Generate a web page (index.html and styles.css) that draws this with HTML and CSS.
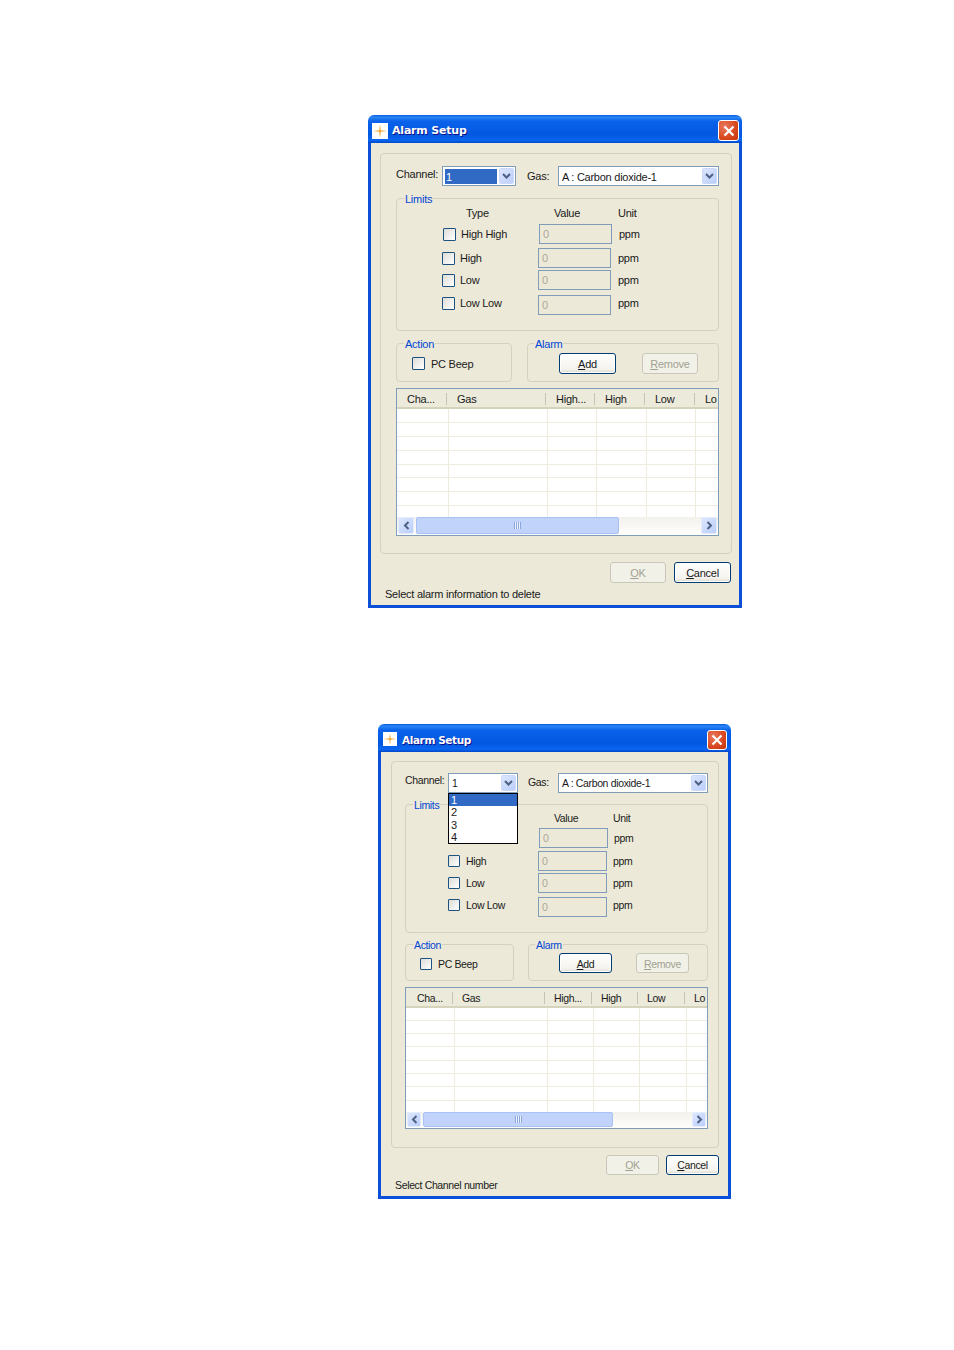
FILE: index.html
```html
<!DOCTYPE html>
<html lang="en">
<head>
<meta charset="utf-8">
<title>Alarm Setup</title>
<link rel="stylesheet" href="styles.css">
</head>
<body>
<section class="dialog d1">
  <header class="titlebar">
    <span class="appicon"><svg viewBox="0 0 16 16" width="100%" height="100%"><rect width="16" height="16" fill="#fff"/><path d="M8 1L8.8 7.2 15 8 8.8 8.8 8 15 7.2 8.8 1 8 7.2 7.2Z" fill="#f0a830"/></svg></span>
    <h1 class="title">Alarm Setup</h1>
    <span class="close"><svg viewBox="0 0 12 12" width="12" height="12"><path d="M1.5 1.5L10.5 10.5M10.5 1.5L1.5 10.5" stroke="#fff" stroke-width="2.2" fill="none"/></svg></span>
  </header>
  <div class="client">
    <div class="panel">
      <div class="toprow">
        <span class="lbl-channel">Channel:</span>
        <div class="combo combo-channel"><span class="combo-value selected">1</span><span class="arrow"><svg viewBox="0 0 9 6" width="9" height="6"><path d="M1 1L4.5 4.5 8 1" stroke="#4d6185" stroke-width="2" fill="none"/></svg></span></div>
        <span class="lbl-gas">Gas:</span>
        <div class="combo combo-gas"><span class="combo-value">A : Carbon dioxide-1</span><span class="arrow"><svg viewBox="0 0 9 6" width="9" height="6"><path d="M1 1L4.5 4.5 8 1" stroke="#4d6185" stroke-width="2" fill="none"/></svg></span></div>
      </div>
      <div class="group limits">
        <span class="legend">Limits</span>
        <div class="heads"><span class="h-type">Type</span><span class="h-value">Value</span><span>Unit</span></div>
        <div class="row first"><span class="check"></span><span class="rowlabel">High High</span><span class="field">0</span><span class="unit">ppm</span></div>
        <div class="row second"><span class="check"></span><span class="rowlabel">High</span><span class="field">0</span><span class="unit">ppm</span></div>
        <div class="row third"><span class="check"></span><span class="rowlabel">Low</span><span class="field">0</span><span class="unit">ppm</span></div>
        <div class="row fourth"><span class="check"></span><span class="rowlabel">Low Low</span><span class="field">0</span><span class="unit">ppm</span></div>
      </div>
      <div class="pair">
        <div class="group action"><span class="legend">Action</span><span class="check"></span><span class="beep">PC Beep</span></div>
        <div class="group alarm"><span class="legend">Alarm</span><span class="btn default"><span><u>A</u>dd</span></span><span class="btn off"><span><u>R</u>emove</span></span></div>
      </div>
      <div class="table">
        <div class="thead"><span>Cha...</span><span>Gas</span><span>High...</span><span>High</span><span>Low</span><span>Lo</span></div>
        <div class="tbody">
          <div class="tr"><i></i><i></i><i></i><i></i><i></i><i></i></div>
          <div class="tr"><i></i><i></i><i></i><i></i><i></i><i></i></div>
          <div class="tr"><i></i><i></i><i></i><i></i><i></i><i></i></div>
          <div class="tr"><i></i><i></i><i></i><i></i><i></i><i></i></div>
          <div class="tr"><i></i><i></i><i></i><i></i><i></i><i></i></div>
          <div class="tr"><i></i><i></i><i></i><i></i><i></i><i></i></div>
          <div class="tr"><i></i><i></i><i></i><i></i><i></i><i></i></div>
          <div class="tr"><i></i><i></i><i></i><i></i><i></i><i></i></div>
        </div>
        <div class="hscroll">
          <span class="sbtn"><svg viewBox="0 0 7 9" width="7" height="9"><path d="M5.5 1L2 4.5 5.5 8" stroke="#4d6185" stroke-width="2" fill="none"/></svg></span>
          <span class="thumb"><span class="grip"></span></span>
          <span class="track"></span>
          <span class="sbtn"><svg viewBox="0 0 7 9" width="7" height="9"><path d="M1.5 1L5 4.5 1.5 8" stroke="#4d6185" stroke-width="2" fill="none"/></svg></span>
        </div>
      </div>
    </div>
    <div class="actions"><span class="btn off"><span><u>O</u>K</span></span><span class="btn default"><span><u>C</u>ancel</span></span></div>
    <p class="status">Select alarm information to delete</p>
  </div>
</section>

<section class="dialog d2">
  <header class="titlebar">
    <span class="appicon"><svg viewBox="0 0 16 16" width="100%" height="100%"><rect width="16" height="16" fill="#fff"/><path d="M8 1L8.8 7.2 15 8 8.8 8.8 8 15 7.2 8.8 1 8 7.2 7.2Z" fill="#f0a830"/></svg></span>
    <h1 class="title">Alarm Setup</h1>
    <span class="close"><svg viewBox="0 0 12 12" width="12" height="12"><path d="M1.5 1.5L10.5 10.5M10.5 1.5L1.5 10.5" stroke="#fff" stroke-width="2.2" fill="none"/></svg></span>
  </header>
  <div class="client">
    <div class="panel">
      <div class="toprow">
        <span class="lbl-channel">Channel:</span>
        <div class="combo combo-channel"><span class="combo-value">1</span><span class="arrow"><svg viewBox="0 0 9 6" width="9" height="6"><path d="M1 1L4.5 4.5 8 1" stroke="#4d6185" stroke-width="2" fill="none"/></svg></span>
          <ul class="dropdown"><li class="on">1</li><li>2</li><li>3</li><li>4</li></ul>
        </div>
        <span class="lbl-gas">Gas:</span>
        <div class="combo combo-gas"><span class="combo-value">A : Carbon dioxide-1</span><span class="arrow"><svg viewBox="0 0 9 6" width="9" height="6"><path d="M1 1L4.5 4.5 8 1" stroke="#4d6185" stroke-width="2" fill="none"/></svg></span></div>
      </div>
      <div class="group limits">
        <span class="legend">Limits</span>
        <div class="heads"><span class="h-type">Type</span><span class="h-value">Value</span><span>Unit</span></div>
        <div class="row first"><span class="check"></span><span class="rowlabel">High High</span><span class="field">0</span><span class="unit">ppm</span></div>
        <div class="row second"><span class="check"></span><span class="rowlabel">High</span><span class="field">0</span><span class="unit">ppm</span></div>
        <div class="row third"><span class="check"></span><span class="rowlabel">Low</span><span class="field">0</span><span class="unit">ppm</span></div>
        <div class="row fourth"><span class="check"></span><span class="rowlabel">Low Low</span><span class="field">0</span><span class="unit">ppm</span></div>
      </div>
      <div class="pair">
        <div class="group action"><span class="legend">Action</span><span class="check"></span><span class="beep">PC Beep</span></div>
        <div class="group alarm"><span class="legend">Alarm</span><span class="btn default"><span><u>A</u>dd</span></span><span class="btn off"><span><u>R</u>emove</span></span></div>
      </div>
      <div class="table">
        <div class="thead"><span>Cha...</span><span>Gas</span><span>High...</span><span>High</span><span>Low</span><span>Lo</span></div>
        <div class="tbody">
          <div class="tr"><i></i><i></i><i></i><i></i><i></i><i></i></div>
          <div class="tr"><i></i><i></i><i></i><i></i><i></i><i></i></div>
          <div class="tr"><i></i><i></i><i></i><i></i><i></i><i></i></div>
          <div class="tr"><i></i><i></i><i></i><i></i><i></i><i></i></div>
          <div class="tr"><i></i><i></i><i></i><i></i><i></i><i></i></div>
          <div class="tr"><i></i><i></i><i></i><i></i><i></i><i></i></div>
          <div class="tr"><i></i><i></i><i></i><i></i><i></i><i></i></div>
          <div class="tr"><i></i><i></i><i></i><i></i><i></i><i></i></div>
        </div>
        <div class="hscroll">
          <span class="sbtn"><svg viewBox="0 0 7 9" width="7" height="9"><path d="M5.5 1L2 4.5 5.5 8" stroke="#4d6185" stroke-width="2" fill="none"/></svg></span>
          <span class="thumb"><span class="grip"></span></span>
          <span class="track"></span>
          <span class="sbtn"><svg viewBox="0 0 7 9" width="7" height="9"><path d="M1.5 1L5 4.5 1.5 8" stroke="#4d6185" stroke-width="2" fill="none"/></svg></span>
        </div>
      </div>
    </div>
    <div class="actions"><span class="btn off"><span><u>O</u>K</span></span><span class="btn default"><span><u>C</u>ancel</span></span></div>
    <p class="status">Select Channel number</p>
  </div>
</section>
</body>
</html>
```
FILE: styles.css
```css
* { box-sizing: border-box; }
html, body { margin: 0; padding: 0; background: #fff; }
body {
  width: 954px;
  height: 1350px;
  overflow: hidden;
  font: 11px/14px "Liberation Sans", Arial, sans-serif;
  color: #1a1a1a;
}

.dialog { display: flex; flex-direction: column; border-radius: 6px 6px 0 0; }
.d1 { width: 374px; height: 493px; margin: 115px 0 0 368px; letter-spacing: -.25px; }
.d2 { width: 353px; height: 475px; margin: 116px 0 0 378px; font-size: 10.5px; letter-spacing: -.35px; }

.titlebar {
  height: 28px;
  flex: none;
  display: flex;
  align-items: center;
  padding: 3px 3px 0 4px;
  border-radius: 6px 6px 0 0;
  background: linear-gradient(#0a5ae0 0, #2a86f6 8%, #0a62ea 22%, #0358e0 70%, #0a66f0 90%, #0048c8 100%);
}
.d2 .titlebar { padding: 2px 4px 0 5px; }
.appicon { width: 16px; height: 16px; flex: none; display: flex; }
.d2 .appicon { width: 14px; height: 14px; }
.title {
  margin: 0 0 0 4px;
  flex: 1;
  padding-top: 1px;
  font: bold 11px/16px "DejaVu Sans", sans-serif;
  letter-spacing: -.2px;
  color: #fff;
  text-shadow: 1px 1px 0 #0f1089;
}
.d2 .title { margin-left: 5px; font-size: 10.5px; letter-spacing: -.4px; }
.close {
  width: 21px;
  height: 21px;
  flex: none;
  display: flex;
  align-items: center;
  justify-content: center;
  border: 1px solid #fff;
  border-radius: 3px;
  background: radial-gradient(circle at 30% 30%, #e8795c, #d8481f 60%, #c23510);
}
.d2 .close { width: 20px; height: 20px; margin-top: 1px; }

.client {
  flex: 1;
  min-height: 0;
  display: flex;
  flex-direction: column;
  background: #ece9d8;
  border: 3px solid #0a4fd8;
  border-top: 0;
}
.d1 .client { padding: 10px 7px 0 9px; }
.d2 .client { padding: 9px 9px 0 10px; }

.panel { border: 1px solid #d4d1bf; border-radius: 4px; }
.d1 .panel { height: 401px; padding: 12px 12px 0 15px; }
.d2 .panel { height: 387px; padding: 11px 10px 0 13px; }

.toprow { display: flex; height: 20px; }
.lbl-channel { flex: none; margin-top: 1px; }
.lbl-gas { flex: none; margin-top: 3px; }
.d2 .lbl-channel { margin-top: 0; }
.d2 .lbl-gas { margin-top: 2px; }
.d1 .lbl-channel { width: 46px; }
.d1 .lbl-gas { width: 31px; margin-left: 11px; }
.d2 .lbl-channel { width: 43px; }
.d2 .lbl-gas { width: 30px; margin-left: 10px; }

.combo {
  position: relative;
  height: 20px;
  flex: none;
  display: flex;
  align-items: center;
  border: 1px solid #7f9db9;
  background: #fff;
  padding: 1px;
}
.d1 .combo-channel { width: 74px; }
.d2 .combo-channel { width: 70px; }
.d1 .combo-gas { width: 161px; }
.d2 .combo-gas { width: 150px; }
.combo-value { flex: 1; padding-left: 2px; line-height: 15px; height: 15px; }
.d1 .combo-value { line-height: 17px; }
.selected { background: #316ac5; color: #fff; margin: 0 2px 0 1px; padding-left: 1px; }
.arrow {
  width: 15px;
  height: 16px;
  flex: none;
  display: flex;
  align-items: center;
  justify-content: center;
  background: linear-gradient(135deg, #dce6fd, #bccffb);
  border: 1px solid #c9d8fb;
  border-radius: 2px;
}

.dropdown {
  position: absolute;
  left: -1px;
  top: 19px;
  width: 70px;
  height: 51px;
  margin: 0;
  padding: 0;
  list-style: none;
  background: #fff;
  border: 1px solid #000;
  z-index: 2;
  font-size: 11px;
}
.dropdown li { height: 12.4px; line-height: 12.4px; padding-left: 2px; }
.dropdown .on { background: #316ac5; color: #fff; }

.group { position: relative; border: 1px solid #d4d1bf; border-radius: 4px; }
.legend {
  position: absolute;
  left: 7px;
  top: -7px;
  padding: 0 1px;
  background: #ece9d8;
  color: #0046d5;
}
.alarm .legend { left: 6px; }

.limits { display: flex; flex-direction: column; }
.d1 .limits { height: 133px; margin-top: 12px; padding-top: 7px; }
.d2 .limits { height: 129px; margin-top: 11px; padding-top: 6px; }
.heads { display: flex; height: 14px; flex: none; }
.d1 .heads { padding-left: 69px; }
.d1 .h-type { width: 88px; }
.d1 .h-value { width: 64px; }
.d2 .heads { padding-left: 65px; }
.d2 .h-type { width: 83px; }
.d2 .h-value { width: 59px; }

.row { display: flex; align-items: center; height: 20px; flex: none; }
.d1 .row { padding-left: 45px; }
.d2 .row { padding-left: 42px; }
.d1 .first { margin-top: 4px; padding-left: 46px; }
.d1 .second { margin-top: 4px; }
.d1 .third { margin-top: 2px; }
.d1 .fourth { margin-top: 3px; }
.d2 .first { margin-top: 3px; padding-left: 43px; }
.d2 .second { margin-top: 3px; }
.d2 .third { margin-top: 2px; }
.d2 .fourth { margin-top: 2px; }

.check {
  width: 13px;
  height: 13px;
  flex: none;
  border: 1px solid #1c5180;
  border-radius: 1px;
  background: linear-gradient(135deg, #dcdcd7, #fff);
}
.d2 .check { width: 12px; height: 12px; }
.rowlabel { flex: none; margin-left: 6px; }
.d1 .rowlabel { width: 78px; margin-left: 5px; }
.d2 .rowlabel { width: 72px; }
.field {
  flex: none;
  height: 20px;
  padding: 2px 0 0 3px;
  border: 1px solid #7f9db9;
  color: #aca899;
  background: #ece9d8;
}
.d1 .field { width: 73px; }
.d2 .field { width: 69px; }
.unit { flex: none; margin-left: 7px; }
.d2 .unit { margin-left: 6px; }
.fourth .field { margin-top: 4px; }

.pair { display: flex; }
.d1 .pair { margin-top: 12px; gap: 15px; }
.d2 .pair { margin-top: 11px; gap: 14px; }
.action, .alarm { display: flex; }
.action { align-items: center; }
.d1 .action { width: 116px; height: 39px; padding: 2px 0 0 15px; }
.d2 .action { width: 109px; height: 37px; padding: 3px 0 0 14px; }
.beep { margin-left: 6px; }
.d1 .alarm { width: 192px; height: 39px; padding: 9px 0 0 31px; gap: 26px; }
.d2 .alarm { width: 180px; height: 37px; padding: 8px 0 0 30px; gap: 24px; }

.btn {
  display: flex;
  align-items: center;
  justify-content: center;
  flex: none;
  border-radius: 3px;
  border: 1px solid #003c74;
  background: linear-gradient(#fff, #f4f3ee 80%, #dcd8c8);
}
.d1 .btn { width: 57px; height: 21px; }
.d1 .btn.off { width: 56px; }
.d2 .btn { width: 53px; height: 20px; }
.d2 .alarm .btn { padding-top: 1px; }
.btn.off { border-color: #c9c7ba; background: #f2f1e8; color: #a1a192; }
.btn.default { box-shadow: inset 0 0 0 1px #fff; }

.table {
  display: flex;
  flex-direction: column;
  border: 1px solid #7f9db9;
  background: #fff;
  overflow: hidden;
}
.d1 .table { height: 148px; width: 323px; margin-top: 6px; }
.d2 .table { height: 142px; width: 303px; margin-top: 6px; }

.thead {
  flex: none;
  display: flex;
  height: 20px;
  padding-top: 3px;
  background: #ebeadb;
  border-bottom: 2px solid #d6d3bd;
}
.thead span {
  flex: none;
  height: 14px;
  background: linear-gradient(#c7c5b2, #c7c5b2) right center / 1px 12px no-repeat;
}
.d1 .thead span { padding-left: 10px; }
.d2 .thead span { padding-left: 9px; }
.d1 .thead span:nth-child(1) { width: 50px; }
.d1 .thead span:nth-child(2) { width: 99px; }
.d1 .thead span:nth-child(3) { width: 49px; }
.d1 .thead span:nth-child(4) { width: 50px; }
.d1 .thead span:nth-child(5) { width: 50px; }
.d2 .thead span:nth-child(1) { width: 47px; padding-left: 11px; }
.d2 .thead span:nth-child(2) { width: 92px; }
.d2 .thead span:nth-child(3) { width: 47px; }
.d2 .thead span:nth-child(4) { width: 46px; }
.d2 .thead span:nth-child(5) { width: 47px; }
.thead span:nth-child(6) { background: none; flex: 1; overflow: hidden; }

.tbody { flex: 1; min-height: 0; display: flex; flex-direction: column; }
.tr { display: grid; flex: none; border-bottom: 1px solid #efecdf; }
.d1 .tr { height: 14px; grid-template-columns: 52px 99px 49px 50px 49px 1fr; }
.d2 .tr { height: 13px; grid-template-columns: 49px 93px 46px 46px 47px 1fr; }
.d1 .tr:nth-child(5) { height: 13px; }
.d2 .tr:nth-child(4), .d2 .tr:nth-child(7) { height: 14px; }
.tr:last-child { flex: 1; border-bottom: 0; }
.tr i { border-right: 1px solid #efecdf; }
.tr i:last-child { border-right: 0; }

.hscroll { flex: none; display: flex; align-items: stretch; background: linear-gradient(#f3f1ec, #fefefb); padding: 0 1px 1px; }
.d1 .hscroll { height: 18px; }
.d2 .hscroll { height: 16px; }
.sbtn {
  flex: none;
  display: flex;
  align-items: center;
  justify-content: center;
  background: linear-gradient(135deg, #dce6fd, #bccffb);
  border: 1px solid #e4ecfd;
  border-radius: 2px;
}
.d1 .sbtn { width: 16px; }
.d2 .sbtn { width: 14px; }
.thumb {
  flex: none;
  display: flex;
  align-items: center;
  justify-content: center;
  margin-left: 2px;
  background: #c1d3fb;
  border: 1px solid #a9c1f3;
  border-radius: 2px;
}
.d1 .thumb { width: 203px; }
.d2 .thumb { width: 190px; }
.grip {
  width: 7px;
  height: 7px;
  background: repeating-linear-gradient(90deg, #8aa6dc 0 1px, #eef3fe 1px 2px);
}
.track { flex: 1; }

.actions { display: flex; justify-content: flex-end; flex: none; }
.d1 .actions { margin-top: 8px; gap: 8px; padding-right: 1px; }
.d2 .actions { margin-top: 7px; gap: 7px; }
.status { margin: 0; flex: none; }
.d1 .status { margin: 4px 0 0 5px; }
.d2 .status { margin: 3px 0 0 4px; }
```
